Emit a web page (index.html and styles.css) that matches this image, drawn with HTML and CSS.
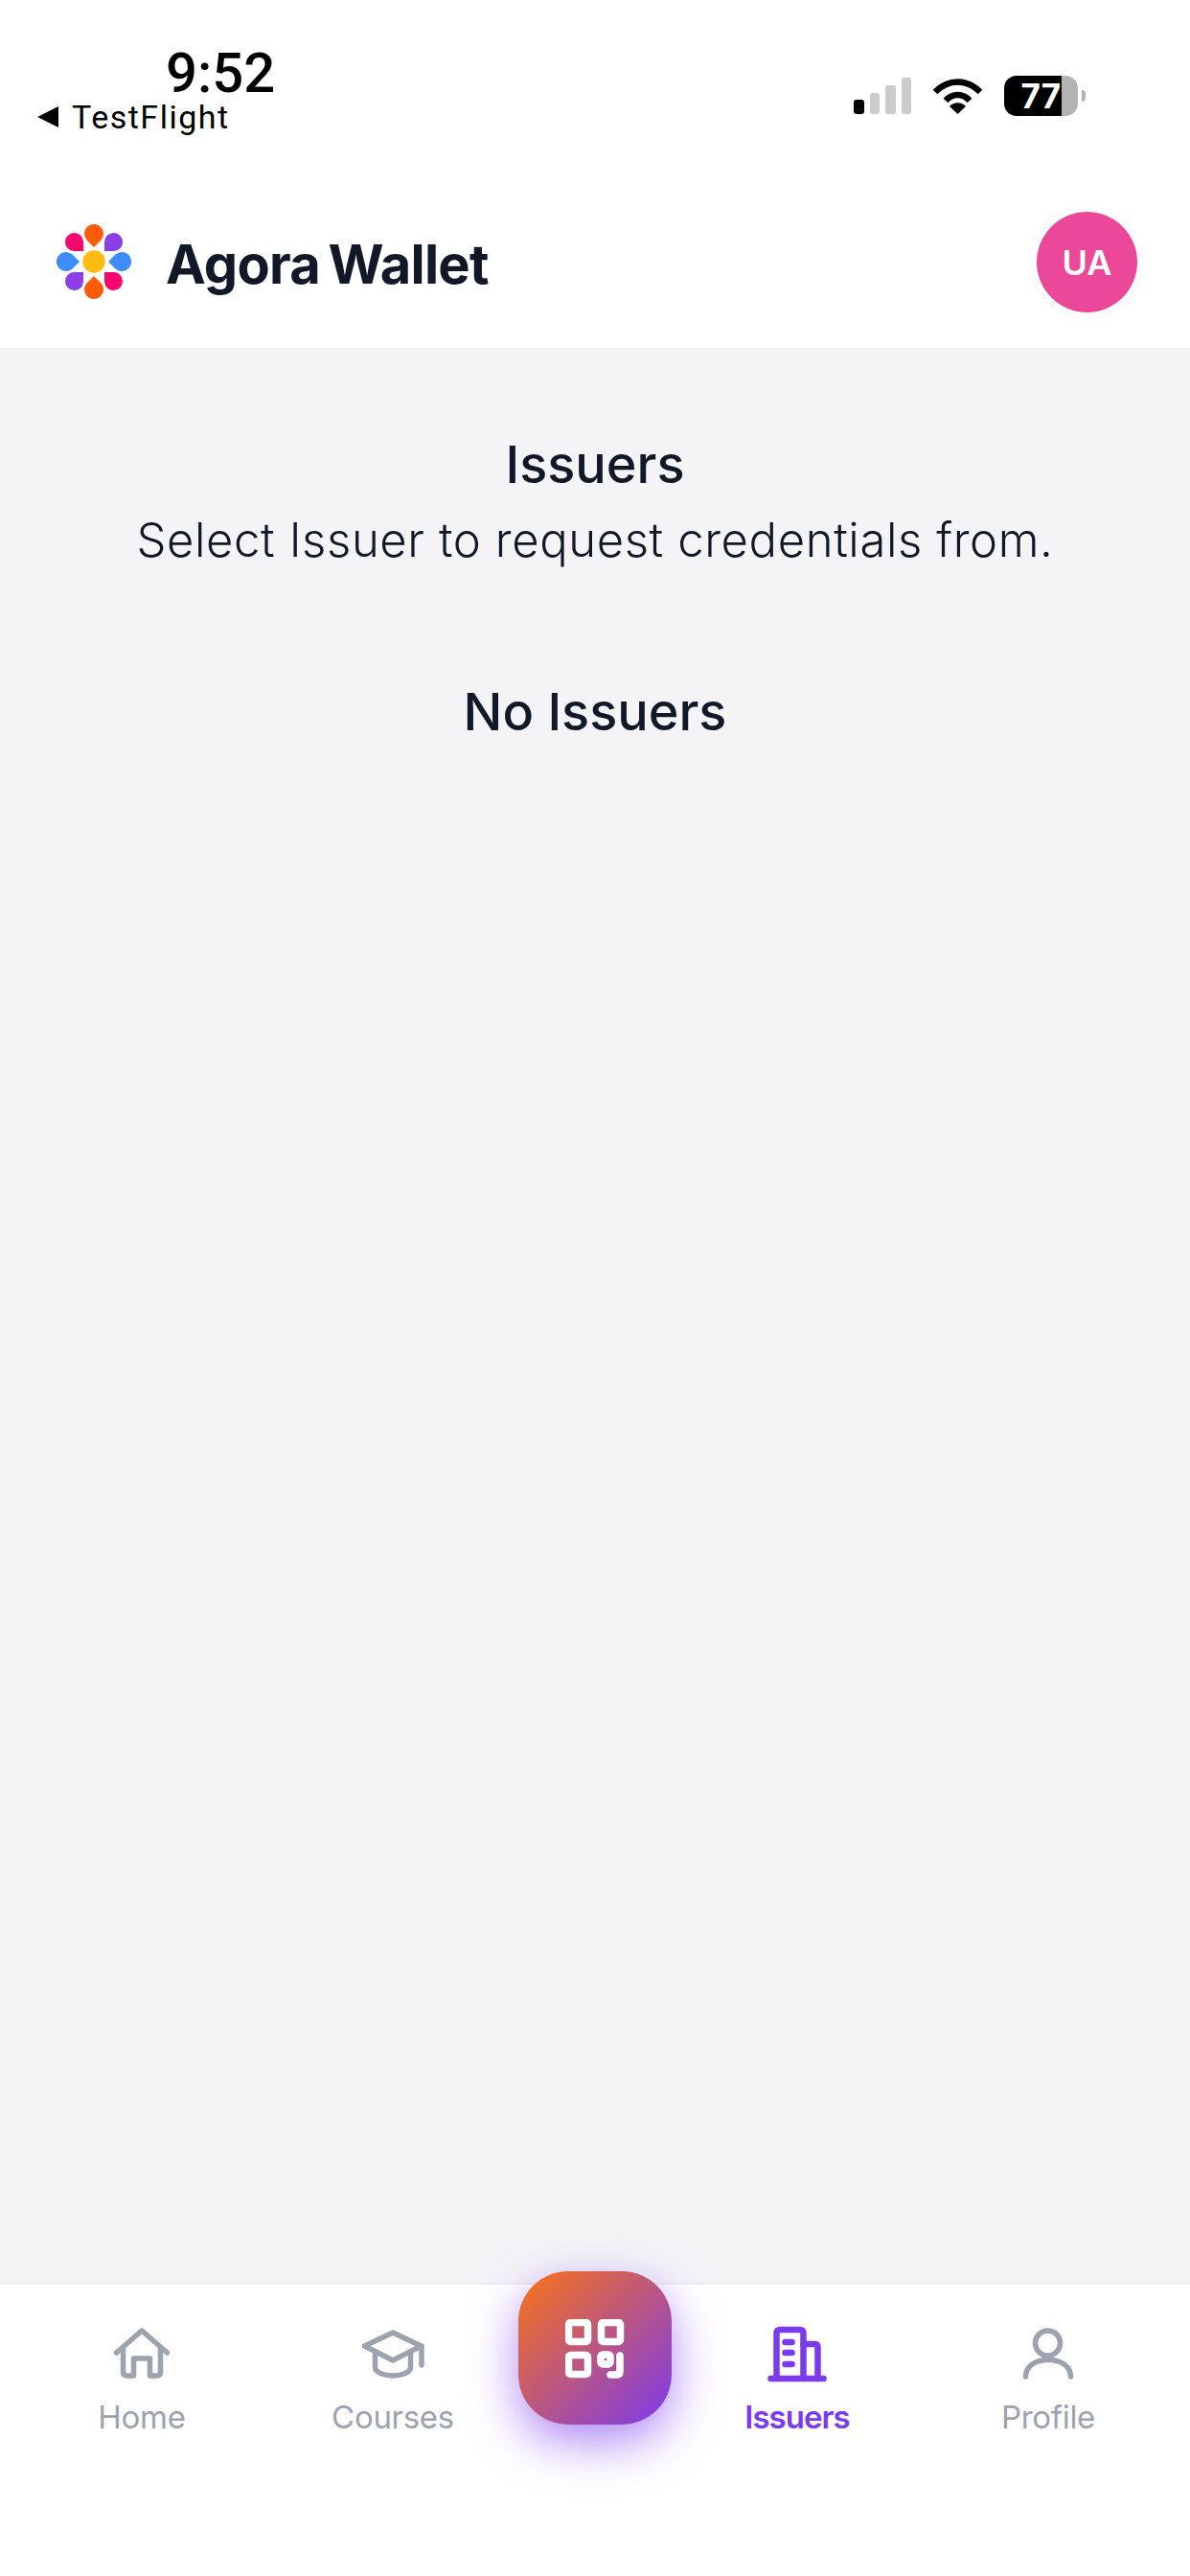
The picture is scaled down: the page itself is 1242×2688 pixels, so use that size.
FILE: index.html
```html
<!DOCTYPE html>
<html lang="en">
<head>
    <meta charset="UTF-8">
    <meta name="viewport" content="width=device-width, initial-scale=1.0">
    <title>Agora Wallet</title>
    <link rel="stylesheet" href="styles.css">
</head>
<body>

<div class="status-bar">
    <div class="status-left">
        <div class="status-time">9:52</div>
        <div class="status-back">
            <svg class="back-arrow" viewBox="0 0 22 22"><path d="M0 11 L22 0 V22 Z"/></svg>
            <span>TestFlight</span>
        </div>
    </div>
    <div class="status-right">
        <div class="signal">
            <span class="signal-bar bar-1"></span>
            <span class="signal-bar bar-2"></span>
            <span class="signal-bar bar-3"></span>
            <span class="signal-bar bar-4"></span>
        </div>
        <svg class="wifi" viewBox="0 0 53 38">
            <path d="M3 15 C17 1 36 1 50 15" fill="none" stroke="#000" stroke-width="6.5"/>
            <path d="M14 24 C21 16 32 16 39 24" fill="none" stroke="#000" stroke-width="6.5"/>
            <path d="M26.5 38 L18 30 C23 25 30 25 35 30 Z"/>
        </svg>
        <div class="battery">
            <div class="battery-body">
                <div class="battery-level">77</div>
                <div class="battery-rest"></div>
            </div>
            <div class="battery-nub"></div>
        </div>
    </div>
</div>

<header class="app-header">
    <div class="brand">
        <svg class="brand-logo" viewBox="0 0 78 78">
            <g fill="#ff5c0a">
                <path d="M39 24 L31.5 16.5 A10 10 0 1 1 46.5 16.5 Z"/>
                <path d="M39 24 L31.5 16.5 A10 10 0 1 1 46.5 16.5 Z" transform="rotate(180 39 39)"/>
            </g>
            <g fill="#3f8cff">
                <path d="M39 24 L31.5 16.5 A10 10 0 1 1 46.5 16.5 Z" transform="rotate(90 39 39)"/>
                <path d="M39 24 L31.5 16.5 A10 10 0 1 1 46.5 16.5 Z" transform="rotate(270 39 39)"/>
            </g>
            <g fill="#f5076e">
                <path d="M28 28 H18 A9.5 9.5 0 1 1 28 18 Z"/>
                <path d="M28 28 H18 A9.5 9.5 0 1 1 28 18 Z" transform="rotate(180 39 39)"/>
            </g>
            <g fill="#8b3fe8">
                <path d="M28 28 H18 A9.5 9.5 0 1 1 28 18 Z" transform="rotate(90 39 39)"/>
                <path d="M28 28 H18 A9.5 9.5 0 1 1 28 18 Z" transform="rotate(270 39 39)"/>
            </g>
            <circle cx="39" cy="39" r="11.7" fill="#ffbb0f"/>
        </svg>
        <span class="brand-name">Agora Wallet</span>
    </div>
    <div class="avatar">UA</div>
</header>

<main class="content">
    <h1 class="page-title">Issuers</h1>
    <p class="page-subtitle">Select Issuer to request credentials from.</p>
    <h2 class="empty-title">No Issuers</h2>
</main>

<nav class="tab-bar">
    <div class="tab">
        <svg class="tab-icon" viewBox="-3.5 -2 66 60">
            <path d="M3 26 L29.5 3 L56 26"/>
            <path d="M10 21 V46 Q10 50 14 50 H21 V32 H38 V50 H45 Q49 50 49 46 V21"/>
        </svg>
        <span class="tab-label">Home</span>
    </div>
    <div class="tab">
        <svg class="tab-icon" viewBox="-0.5 -5 66 60">
            <path d="M3 16 L32.5 2 L62 16 L32.5 31 Z"/>
            <path d="M62.5 16 V36"/>
            <path d="M14 24 V38 C14 44 24 47 32.5 47 C41 47 51 44 51 38 V24"/>
        </svg>
        <span class="tab-label">Courses</span>
    </div>
    <button class="scan-button">
        <svg class="scan-icon" viewBox="0 0 62 62">
            <rect x="3.5" y="3.5" width="20" height="20" rx="2"/>
            <rect x="37.5" y="3.5" width="20" height="20" rx="2"/>
            <rect x="3.5" y="37.5" width="20" height="20" rx="2"/>
            <rect x="37" y="37" width="10" height="10" rx="2"/>
            <path d="M57 38 V55 Q57 58 54 58 H47"/>
        </svg>
    </button>
    <div class="tab tab-active">
        <svg class="tab-icon" viewBox="-2.5 -1 66 60">
            <path d="M9 54 V7 Q9 3 13 3 H33 Q37 3 37 7 V54"/>
            <path d="M37 18 H49 Q52 18 52 22 V54"/>
            <path d="M3 54 H58"/>
            <path d="M18 16 H25 M18 27 H25 M18 39 H25"/>
        </svg>
        <span class="tab-label">Issuers</span>
    </div>
    <div class="tab">
        <svg class="tab-icon" viewBox="-6.5 -2 66 60">
            <circle cx="26" cy="16" r="13"/>
            <path d="M3 51 C3 40 13 33.5 26.5 33.5 C40 33.5 50 40 50 51"/>
        </svg>
        <span class="tab-label">Profile</span>
    </div>
</nav>

</body>
</html>
```

FILE: styles.css
```css
* {
    margin: 0;
    padding: 0;
    box-sizing: border-box;
}

body {
    font-family: Inter, "Noto Sans", sans-serif;
    background-color: #f4f4f7;
    color: #111827;
    width: 1242px;
    height: 2688px;
    display: flex;
    flex-direction: column;
    overflow: hidden;
}

/* Status bar */
.status-bar {
    height: 180px;
    background-color: #fff;
    display: flex;
    justify-content: space-between;
    padding: 47px 109px 0 39px;
}

.status-left {
    display: flex;
    flex-direction: column;
}

.status-time {
    font-family: Roboto, sans-serif;
    font-size: 58px;
    font-weight: 500;
    line-height: 58px;
    color: #000;
    margin-left: 134px;
}

.status-back {
    display: flex;
    align-items: center;
    gap: 14px;
    font-family: Roboto, sans-serif;
    font-size: 34px;
    line-height: 34px;
    letter-spacing: 1.5px;
    color: #000;
}

.back-arrow {
    width: 22px;
    height: 22px;
}

.status-right {
    display: flex;
    align-items: flex-start;
    gap: 22px;
    padding-top: 32px;
}

.signal {
    display: flex;
    align-items: flex-end;
    gap: 6px;
    height: 38px;
    margin-top: 2px;
}

.signal-bar {
    width: 10.5px;
    background-color: #ccc;
    border-radius: 3px;
}

.bar-1 { height: 15px; background-color: #000; }
.bar-2 { height: 22px; }
.bar-3 { height: 30px; }
.bar-4 { height: 38px; }

.wifi {
    width: 53px;
    height: 38px;
    margin-top: 2px;
}

.battery {
    display: flex;
    align-items: center;
    gap: 4px;
}

.battery-body {
    display: flex;
    width: 77px;
    height: 42px;
    border-radius: 13px;
    overflow: hidden;
}

.battery-level {
    width: 60px;
    background-color: #000;
    color: #fff;
    font-size: 35px;
    font-weight: 700;
    line-height: 42px;
    text-align: right;
    padding-right: 1px;
}

.battery-rest {
    flex: 1;
    background-color: #b3b3b3;
}

.battery-nub {
    width: 4px;
    height: 12px;
    background-color: #b3b3b3;
    border-radius: 0 4px 4px 0;
}

/* Header */
.app-header {
    height: 185px;
    background-color: #fff;
    border-bottom: 2px solid #eceef1;
    display: flex;
    justify-content: space-between;
    align-items: flex-start;
    padding: 41px 55px 0 59px;
}

.brand {
    display: flex;
    align-items: center;
    gap: 36px;
    margin-top: 13px;
}

.brand-logo {
    width: 78px;
    height: 78px;
}

.brand-name {
    font-size: 56px;
    font-weight: 700;
    letter-spacing: -0.75px;
    word-spacing: -4px;
    padding-top: 6px;
}

.avatar {
    width: 105px;
    height: 105px;
    border-radius: 50%;
    background-color: #ec4899;
    color: #fff;
    font-size: 36px;
    font-weight: 600;
    display: flex;
    justify-content: center;
    align-items: center;
    box-shadow: 0 0 0 5px #fff, 0 0 8px 5px rgba(0, 0, 0, 0.03);
}

/* Content */
.content {
    flex: 1;
    text-align: center;
    padding-top: 88px;
}

.page-title {
    font-size: 54px;
    font-weight: 500;
    line-height: 64px;
}

.page-subtitle {
    font-size: 49px;
    font-weight: 300;
    line-height: 60px;
    letter-spacing: 0.6px;
    margin-top: 17px;
}

.empty-title {
    font-size: 54px;
    font-weight: 500;
    line-height: 64px;
    margin-top: 117px;
}

/* Bottom tabs */
.tab-bar {
    height: 306px;
    background-color: #fff;
    border-top: 2px solid #eceef1;
    display: grid;
    grid-template-columns: 1fr 1fr 160px 1fr 1fr;
    padding: 0 17px;
}

.tab {
    display: flex;
    flex-direction: column;
    align-items: center;
    padding-top: 43px;
    gap: 15px;
}

.tab-icon {
    width: 66px;
    height: 60px;
    fill: none;
    stroke: #9ca3af;
    stroke-width: 5.5;
    stroke-linecap: round;
    stroke-linejoin: round;
}

.tab-label {
    font-size: 33px;
    line-height: 40px;
    letter-spacing: -0.3px;
    color: #9ca3af;
}

.tab-active .tab-icon {
    stroke: #7c3aed;
    stroke-width: 6.5;
}

.tab-active .tab-label {
    color: #7c3aed;
    font-weight: 600;
    letter-spacing: -1px;
}

.scan-button {
    width: 160px;
    height: 160px;
    margin-top: -14px;
    padding-top: 2px;
    border: none;
    border-radius: 52px;
    background: linear-gradient(135deg, #f97316, #7c3aed);
    box-shadow: 0 18px 50px rgba(124, 58, 237, 0.6);
    display: flex;
    justify-content: center;
    align-items: center;
}

.scan-icon {
    width: 62px;
    height: 62px;
    fill: none;
    stroke: #fff;
    stroke-width: 7.5;
    stroke-linecap: round;
    stroke-linejoin: round;
}
```
